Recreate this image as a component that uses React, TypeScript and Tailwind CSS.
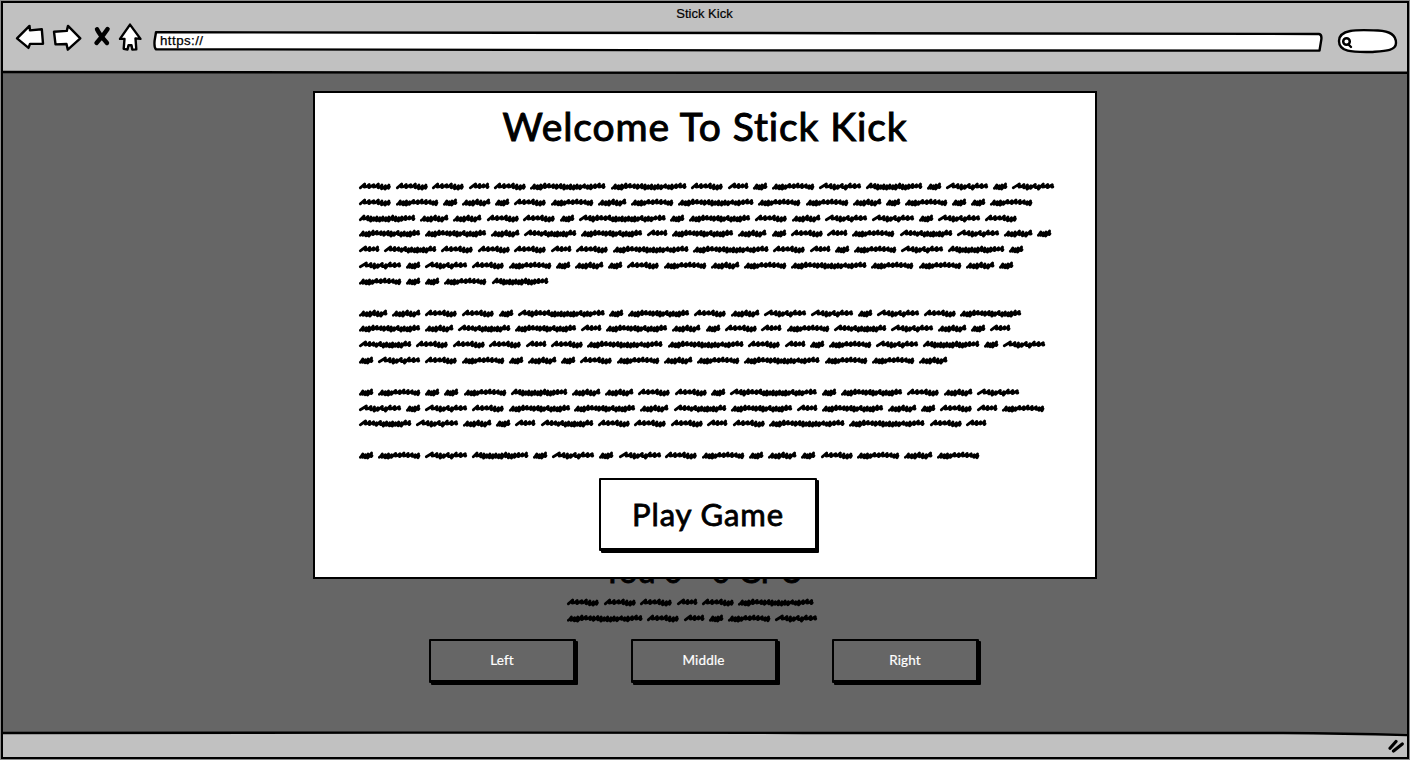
import React from "react";

type Kind = "A" | "B" | "C" | "D" | "E" | "F" | "G" | "H" | "I" | "J" | "K";

// L = long lead-in, s = loose stroke, d = dense stroke
const WORDS: Record<Kind, { w: number; p: string }> = {
  A: { w: 31.6, p: "ssssddd" },
  B: { w: 20.3, p: "Lsss" },
  C: { w: 42.2, p: "ddddsssssdd" },
  D: { w: 14.2, p: "ddds" },
  E: { w: 28.3, p: "dddsdds" },
  F: { w: 75.4, p: "dddsssdsddddddsddsss" },
  G: { w: 61, p: "dddsssdsddsddddss" },
  H: { w: 52.2, p: "Lssdsdddddddss" },
  I: { w: 56.2, p: "ssdddddddsdddsss" },
  J: { w: 42, p: "Lsddsdsss" },
  K: { w: 86.6, p: "Lsdssssdddddddddsdddsss" },
};

function scribble(kind: Kind): string {
  const { w, p } = WORDS[kind];
  const size = (c: string) => (c === "L" ? 6 : c === "s" ? 4.2 : 3.2);
  const total = p.split("").reduce((t, c) => t + size(c), 0);
  const k = (w - 2.8) / total;
  let x = 1.3;
  let d = `M${x} ${p[0] === "d" ? 9.2 : 8.8}`;
  p.split("").forEach((c, i) => {
    const step = size(c) * k;
    const top = c === "d" ? 6 + (i % 2) * 0.7 : 5 + (i % 3) * 0.4;
    const bottom = c === "d" ? 9.4 + ((i * 7) % 3) * 0.4 : 8.1 + (i % 2) * 0.6;
    const tx = x + step * 0.95;
    d += `Q${(x + step * 0.35).toFixed(2)} ${(bottom - 0.6).toFixed(1)} ${tx.toFixed(2)} ${top.toFixed(1)}`;
    x += step;
    d += `L${(x - 0.6).toFixed(2)} ${bottom.toFixed(1)}`;
  });
  return d + `L${(w - 1.2).toFixed(2)} 7.8`;
}

function Line({ words }: { words: string }) {
  return (
    <div className="flex h-[15.83px] gap-[4.95px]">
      {words.split("").map((c, i) => {
        const kind = c as Kind;
        return (
          <svg
            key={i}
            className="block shrink-0 overflow-visible"
            width={WORDS[kind].w}
            height="16"
            fill="none"
            stroke="#000"
            strokeWidth="2.8"
            strokeLinejoin="round"
            strokeLinecap="round"
          >
            <path d={scribble(kind)} />
          </svg>
        );
      })}
    </div>
  );
}

const PARAGRAPHS = [
  [
    "AAABAFFABDCJIDJDJ",
    "ACDEDACECFCCEDCDDC",
    "IEEAADKDGAEJJDJA",
    "GGEHGBGEDABCHJED",
    "BHAAABAFFABDCJID",
    "JDJACDEDACECFCCED",
    "CDDCI",
  ],
  ["EEAADKDGAEJJDJAG", "GEHGBGEDABCHJEDB", "HAAABAFFABDCJIDJ", "DJACDEDACECFCCE"],
  ["DCDDCIEEAADKDGAEJ", "JDJAGGEHGBGEDABC", "HJEDBHAAABAFFAB"],
  ["DCJIDJDJACDEDACEC"],
];

function GameButton({ label }: { label: string }) {
  return (
    <button className="flex h-[44px] w-[147px] items-center justify-center rounded-[1px] border-[2.5px] border-r-[3px] border-b-[3px] border-black bg-[#666] font-['Lato','Liberation_Sans',sans-serif] text-[13.5px] tracking-[0.15px] text-white shadow-[2px_2px_0_#000] [-webkit-text-stroke:0.2px_#fff]">
      {label}
    </button>
  );
}

function Toolbar() {
  return (
    <header className="relative h-[70px] bg-[#c1c1c1]">
      <div className="flex h-[22px] items-center justify-center pr-[1px] font-['Liberation_Sans',sans-serif] text-[13px] text-black [-webkit-text-stroke:0.2px_#000]">
        Stick Kick
      </div>
      <div className="flex h-[32px] items-center pl-[12px]">
        <svg className="block h-[30px] w-[130px] shrink-0 overflow-visible" viewBox="15 25.6 130 30" fill="#fff" stroke="#000" strokeWidth="2.4" strokeLinejoin="round" strokeLinecap="round">
          <path d="M17 38 L29.5 25.5 L30 30 L41.8 28.8 L43 43.3 L30 43.5 L28.5 47.5 Z" />
          <path d="M54 31.3 L66.8 30.5 L68 25.5 L80.3 38 L67.8 49.3 L66.5 43.6 L55.5 44 Z" />
          <path d="M97 28.8 Q99.5 34 107 42.6 M107.6 28.6 Q103.5 35 96.5 42.6" fill="none" strokeWidth="4.4" />
          <path d="M130 24.2 L140.5 38.5 L135.5 38 L136.3 49 L132.3 49.2 L131.5 44.8 L128.5 44.8 L127.5 49.2 L123.7 48.5 L124.5 38.5 L120 38.5 Z" />
        </svg>
        <div className="relative ml-[8px] flex h-[21px] w-[1170px] shrink-0 items-center font-['Liberation_Sans',sans-serif] text-[13.3px] tracking-[0.45px] text-black [-webkit-text-stroke:0.25px_#000]">
          <svg className="absolute inset-0 h-[21px] w-[1170px]" viewBox="0 -0.6 1170 21" fill="#fff" stroke="#000" strokeWidth="2.4" strokeLinejoin="round">
            <path d="M3 0.6 Q400 .2 700 1.6 T1166 2.4 Q1169 3 1168.3 8 L1166.5 19 Q900 19.2 600 18.8 T3 17.6 Q1 16 1.6 9 Z" />
          </svg>
          <span className="relative pl-[7px]">https://</span>
        </div>
        <svg className="ml-[13px] block h-[26px] w-[62px] shrink-0" viewBox="1336 28 62 26" fill="#fff" stroke="#000" strokeWidth="2.4" strokeLinecap="round">
          <path d="M1339 41 C1339 28 1361 30 1378 30.5 C1391 31 1396 36 1396 43 C1396 51 1384 51 1371 52 C1355 52 1339 53 1339 41 Z" />
          <circle cx="1346.5" cy="41.5" r="3.3" strokeWidth="2.5" />
          <path d="M1348.5 44.5 L1351 47" />
        </svg>
      </div>
      <svg className="absolute bottom-[-2px] left-0 h-[5px] w-full" viewBox="0 0 1404 5" preserveAspectRatio="none" fill="none" stroke="#000" strokeWidth="2.4">
        <path d="M0 2 Q300 3 700 2.8 T1404 2.7" />
      </svg>
    </header>
  );
}

export default function App() {
  return (
    <div className="h-[760px] w-[1410px] overflow-hidden bg-[#8c8c8c] pt-[1px] pr-[1px] pl-[1px]">
      <div className="relative flex h-[758px] w-[1408px] flex-col border-[2.5px] border-black bg-[#666]">
        <Toolbar />

        <main className="flex min-h-0 flex-1 flex-col items-center pt-[477px]">
          <h2 className="h-[43px] translate-x-[-2px] translate-y-[-1px] font-['Lato','Liberation_Sans',sans-serif] text-[32.5px] leading-[43px] whitespace-nowrap text-black [-webkit-text-stroke:0.8px_#000]">
            You 0 - 0 CPU
          </h2>
          <div className="mt-[2px] w-[276px]">
            <Line words="AAABAF" />
            <Line words="FABDCJ" />
          </div>
          <div className="mt-[12px] flex gap-[54.5px] pr-[2px]">
            <GameButton label="Left" />
            <GameButton label="Middle" />
            <GameButton label="Right" />
          </div>
        </main>

        <footer className="relative flex h-[25px] shrink-0 items-center justify-end bg-[#c1c1c1] pt-[5px] pr-[1px]">
          <svg className="absolute top-[-2px] left-0 h-[7px] w-full" viewBox="0 0 1404 7" preserveAspectRatio="none">
            <path d="M1180 3 Q1330 3 1404 5 V0 H1180 Z" fill="#666" />
            <path d="M0 3 Q400 2.2 800 3 T1280 3 Q1340 3.2 1404 5.2" fill="none" stroke="#000" strokeWidth="2.3" />
          </svg>
          <svg className="h-[16px] w-[18px]" viewBox="1388 740 18 16" stroke="#000" strokeWidth="3.2" strokeLinecap="round">
            <path d="M1390 749.3 L1396 742.5 M1393.5 752 L1402.3 745" />
          </svg>
        </footer>

        <section className="absolute top-[88px] left-[310px] flex h-[488px] w-[784px] flex-col border-[2.5px] border-black bg-white">
          <h1 className="mt-[8px] h-[50px] text-center font-['Lato','Liberation_Sans',sans-serif] text-[39px] leading-[50px] tracking-[0.9px] whitespace-nowrap text-black [-webkit-text-stroke:1px_#000] [font-variant-ligatures:none]">
            Welcome To Stick Kick
          </h1>
          <div className="mt-[28px] ml-[44px] flex flex-col gap-[15.83px]">
            {PARAGRAPHS.map((lines, i) => (
              <div key={i}>
                {lines.map((l) => (
                  <Line key={l} words={l} />
                ))}
              </div>
            ))}
          </div>
          <button className="mt-[14px] ml-[284px] flex h-[73px] w-[218px] shrink-0 items-center justify-center rounded-[1px] border-[2.5px] border-b-[3px] border-black bg-white font-['Lato','Liberation_Sans',sans-serif] text-[31px] tracking-[0.9px] text-black shadow-[2px_2px_0_#000] [-webkit-text-stroke:0.8px_#000]">
            Play Game
          </button>
        </section>
      </div>
    </div>
  );
}
